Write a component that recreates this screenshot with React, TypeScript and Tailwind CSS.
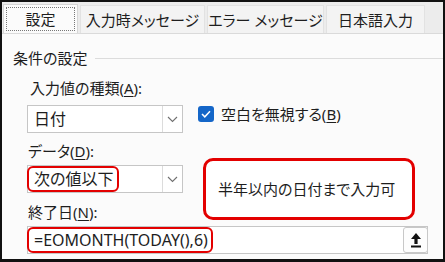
const tabs = [
  { label: "入力時メッセージ", w: "w-[125px]" },
  { label: "エラー メッセージ", w: "w-[117px]" },
  { label: "日本語入力", w: "w-[99px]" },
];

const Chevron = () => (
  <svg width="11" height="7" viewBox="0 0 11 7" fill="none">
    <path d="M1 1l4.5 4.5L10 1" stroke="#707070" strokeWidth="1.1" />
  </svg>
);

const UploadIcon = () => (
  <svg width="12" height="16" viewBox="0 0 12 16">
    <path d="M6 1l5 6H7.6v5H4.4V7H1z" fill="#111" />
    <rect x="1" y="13.5" width="10" height="2" fill="#111" />
  </svg>
);

export default function App() {
  return (
    <div className="w-[445px] h-[262px] border-2 border-b-[3px] border-[#111] bg-[#ececec] flex flex-col overflow-hidden text-[15px] leading-[20px] text-[#1e1e1e] font-[family-name:'Noto_Sans','Noto_Sans_CJK_JP',sans-serif] [font-feature-settings:'palt']">
      {/* tabs */}
      <div className="flex items-end h-[31px] pl-[1px] gap-[2px]">
        <div className="w-[75px] h-[29px] bg-[#fbfbfb] border border-b-0 border-[#d6d6d6] p-[2px]">
          <div className="h-full border border-dotted border-[#777] flex items-center justify-center">
            設定
          </div>
        </div>
        {tabs.map((t) => (
          <div
            key={t.label}
            className={`${t.w} h-[28px] bg-[#f3f3f3] border border-b-0 border-[#e2e2e2] flex items-center justify-center`}
          >
            {t.label}
          </div>
        ))}
      </div>

      {/* panel */}
      <div className="flex-1 bg-[#fbfbfb] border-t border-[#dadada] pt-[14px] pl-[11px]">
        <div className="flex items-center">
          <span>条件の設定</span>
          <div className="flex-1 h-px bg-[#dcdcdc] ml-[8px]" />
        </div>

        <div className="relative pl-[14px]">
          {/* row 1 */}
          <div className="mt-[10px] pl-[3px]">
            入力値の種類(<span className="underline underline-offset-2">A</span>):
          </div>
          <div className="flex items-start mt-[7px]">
            <div className="w-[156px] h-[28px] flex border border-[#c6c6c6] bg-white">
              <div className="flex-1 flex items-center pl-[6px] text-[16px]">日付</div>
              <div className="w-[20px] border-l border-[#dcdcdc] flex items-center justify-center">
                <Chevron />
              </div>
            </div>
            <div className="flex items-center mt-[-1px] ml-[15px] gap-[7px]">
              <div className="w-[16px] h-[16px] rounded-[3px] bg-[#1466c8] flex items-center justify-center">
                <svg width="10" height="8" viewBox="0 0 10 8" fill="none">
                  <path d="M1 4l2.8 2.8L9 1.2" stroke="#fff" strokeWidth="1.5" />
                </svg>
              </div>
              <span>
                空白を無視する(<span className="underline underline-offset-2">B</span>)
              </span>
            </div>
          </div>

          {/* row 2 */}
          <div className="mt-[8px] pl-[1px]">
            データ(<span className="underline underline-offset-2">D</span>):
          </div>
          <div className="mt-[4px] w-[156px] h-[28px] flex border border-[#c6c6c6] bg-white">
            <div className="flex-1 flex items-center">
              <span className="-ml-px h-[26px] flex items-center pl-[5px] pr-[4px] border-2 border-[#e30000] rounded-[6px] text-[16px]">
                次の値以下
              </span>
            </div>
            <div className="w-[20px] border-l border-[#dcdcdc] flex items-center justify-center">
              <Chevron />
            </div>
          </div>

          {/* row 3 */}
          <div className="mt-[9px] pl-[1px]">
            終了日(<span className="underline underline-offset-2">N</span>):
          </div>
          <div className="mt-[4px] w-[401px] h-[28px] flex items-center border border-[#c6c6c6] bg-white">
            <div className="flex-1 flex items-center">
              <span className="-ml-px h-[26px] flex items-center pl-[5px] pr-[3px] border-2 border-[#e30000] rounded-[6px] text-[16px]">
                =EOMONTH(TODAY(),6)
              </span>
            </div>
            <div className="w-[25px] h-[26px] -mr-px border border-[#c8c8c8] rounded-[3px] bg-[#fdfdfd] flex items-center justify-center">
              <UploadIcon />
            </div>
          </div>

          {/* annotation callout */}
          <div className="absolute left-[190px] top-[80px] w-[212px] h-[62px] border-[3px] border-[#e30000] rounded-[10px] bg-white flex items-center pl-[12px]">
            半年以内の日付まで入力可
          </div>
        </div>
      </div>
    </div>
  );
}
